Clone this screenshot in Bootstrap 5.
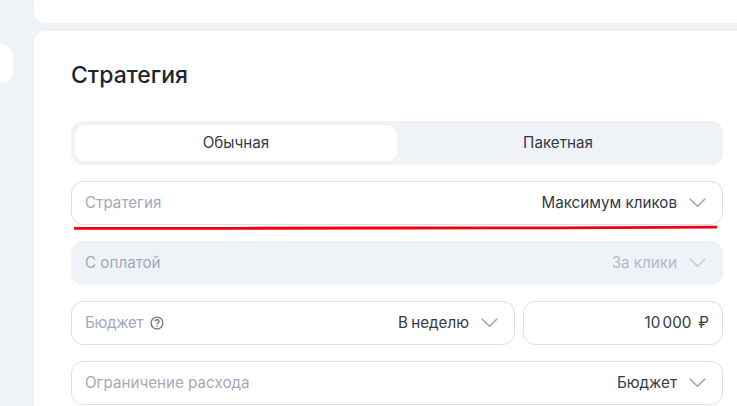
<!DOCTYPE html>
<html lang="ru">
<head>
<meta charset="utf-8">
<title>Стратегия</title>
<link href="https://cdn.jsdelivr.net/npm/bootstrap@5.3.0/dist/css/bootstrap.min.css" rel="stylesheet">
<style>
html, body { height: 406px; overflow: hidden; }
body { background: #eff2f7; font-family: Inter, "Noto Sans", sans-serif; font-size: 15px; color: #2a2f3a; }
.page-shell { width: 737px; height: 406px; }
.side-rail { width: 34px; flex: none; padding-top: 44px; }
.side-stub { width: 13px; height: 39px; background: #fff; border-radius: 0 12px 12px 0; }
.main-col { width: 703px; flex: none; }
.top-stub { height: 23px; background: #fff; border-radius: 0 0 0 12px; margin-bottom: 8px; }
.strategy-card { background: #fff; border-radius: 12px 0 0 0; padding: 0 14px 0 37px; height: 375px; position: relative; }
.strategy-title { font-size: 23px; font-weight: 500; line-height: 28px; margin: 0; padding: 30px 0 32px; color: #1f2530; }
.seg-wrap { height: 44px; background: #eff2f7; border-radius: 12px; padding: 4px; margin-bottom: 16px; }
.seg-item { flex: 1 1 0; border-radius: 10px; line-height: 36px; text-align: center; color: #343a46; font-size: 15.2px; }
.seg-active { background: #fff; }
.fld { height: 44px; border: 1px solid #dcdfe8; border-radius: 12px; background: #fff; padding: 0 16px 0 13px; margin-bottom: 16px; font-size: 15.2px; }
.fld-off { background: #eff2f7; border-color: #eff2f7; }
.fld-lbl { color: #a3a9ba; }
.fld-val { color: #343a46; }
.fld-off .fld-val { color: #b3b9ca; }
.chev { width: 17px; height: 9px; margin-left: 12px; flex: none; fill: none; stroke: #9aa1b5; stroke-width: 1.5; }
.fld-off .chev { stroke: #c4c9d8; }
.hint-ico { width: 14px; height: 14px; margin-left: 7px; flex: none; }
.budget-row { gap: 8px; margin-bottom: 16px; }
.budget-row .fld { margin-bottom: 0; }
.budget-period { width: 444px; flex: none; }
.budget-sum { flex: 1 1 0; padding-right: 13px; }
.tight-words { word-spacing: -1px; }
.tight-sum { word-spacing: -2px; }
.tight-label { letter-spacing: -.3px; }
.rouble { margin-left: 7px; }
.red-mark { position: absolute; left: 37px; top: 192px; width: 650px; height: 8px; overflow: visible; }
</style>
</head>
<body>
<div class="page-shell d-flex">
  <div class="side-rail"><div class="side-stub"></div></div>
  <div class="main-col">
    <div class="top-stub"></div>
    <section class="strategy-card">
      <h2 class="strategy-title">Стратегия</h2>
      <div class="seg-wrap d-flex">
        <div class="seg-item seg-active">Обычная</div>
        <div class="seg-item">Пакетная</div>
      </div>
      <div class="fld d-flex align-items-center justify-content-between">
        <span class="fld-lbl">Стратегия</span>
        <span class="d-flex align-items-center"><span class="fld-val">Максимум кликов</span><svg class="chev" viewBox="0 0 17 9"><path d="M.8.8l7.7 7.4L16.2.8"/></svg></span>
      </div>
      <div class="fld fld-off d-flex align-items-center justify-content-between">
        <span class="fld-lbl">С оплатой</span>
        <span class="d-flex align-items-center"><span class="fld-val">За клики</span><svg class="chev" viewBox="0 0 17 9"><path d="M.8.8l7.7 7.4L16.2.8"/></svg></span>
      </div>
      <div class="budget-row d-flex">
        <div class="fld budget-period d-flex align-items-center justify-content-between">
          <span class="d-flex align-items-center"><span class="fld-lbl tight-label">Бюджет</span>
            <svg class="hint-ico" viewBox="0 0 14 14" fill="none" stroke="#6f7896" stroke-width="1.35"><circle cx="7" cy="7" r="5.9"/><path d="M5 5.6c0-1.2.9-1.9 2-1.9s2 .7 2 1.8c0 1.4-2 1.5-2 3"/><path d="M7 9.5v1.3"/></svg>
          </span>
          <span class="d-flex align-items-center"><span class="fld-val tight-words">В неделю</span><svg class="chev" viewBox="0 0 17 9"><path d="M.8.8l7.7 7.4L16.2.8"/></svg></span>
        </div>
        <div class="fld budget-sum d-flex align-items-center justify-content-end">
          <span class="fld-val tight-sum">10 000</span><span class="fld-val rouble">₽</span>
        </div>
      </div>
      <div class="fld d-flex align-items-center justify-content-between">
        <span class="fld-lbl">Ограничение расхода</span>
        <span class="d-flex align-items-center"><span class="fld-val">Бюджет</span><svg class="chev" viewBox="0 0 17 9"><path d="M.8.8l7.7 7.4L16.2.8"/></svg></span>
      </div>
      <svg class="red-mark" viewBox="0 0 650 8" fill="none"><path d="M3 5.3L165 5.3 325 5 485 4.8 646 4.1" stroke="#f40009" stroke-width="2.8"/></svg>
    </section>
  </div>
</div>
<script src="https://cdn.jsdelivr.net/npm/bootstrap@5.3.0/dist/js/bootstrap.bundle.min.js"></script>
</body>
</html>
